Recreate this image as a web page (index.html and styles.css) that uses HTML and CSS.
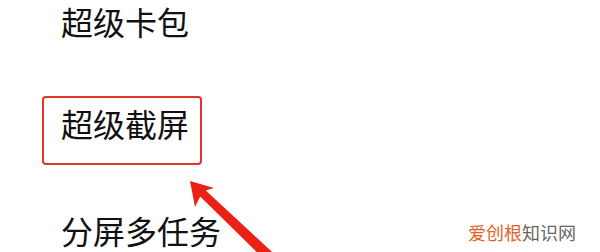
FILE: index.html
```html
<!DOCTYPE html>
<html lang="zh">
<head>
<meta charset="utf-8">
<link rel="stylesheet" href="styles.css">
</head>
<body>
<div class="page">
  <div class="list">
    <div class="item item-first">超级卡包</div>
    <div class="item item-boxed">超级截屏</div>
    <div class="item item-last">分屏多任务</div>
  </div>
  <svg class="arrow" width="600" height="252" viewBox="0 0 600 252">
    <polygon points="190,181 214,188 205.8,190.6 284,263 276,271 200.2,196.4 195,207" fill="#ea2117"/>
  </svg>
  <div class="watermark"><span class="wm-orange">爱创根</span><span class="wm-gray">知识网</span></div>
</div>
</body>
</html>
```
FILE: styles.css
```css
html, body {
  margin: 0;
  padding: 0;
  background: #ffffff;
}
.page {
  position: relative;
  width: 600px;
  height: 252px;
  font-family: "Noto Sans CJK SC", "Noto Sans", sans-serif;
}
.list {
  display: flex;
  flex-direction: column;
  align-items: flex-start;
  padding-left: 42px;
}
.item {
  font-size: 32px;
  line-height: 40px;
  font-weight: 400;
  color: #111111;
  padding-left: 19px;
}
.item-first {
  margin-top: 1px;
}
.item-boxed {
  margin-top: 55px;
  border: 2px solid #e3342b;
  border-radius: 4px;
  padding: 5px 11px 20px 17px;
}
.item-last {
  margin-top: 45px;
}
.arrow {
  position: absolute;
  left: 0;
  top: 0;
}
.watermark {
  position: absolute;
  right: 24px;
  top: 221px;
  font-size: 18px;
  line-height: 22px;
}
.wm-orange {
  color: #e2622a;
}
.wm-gray {
  color: #666666;
}
```
